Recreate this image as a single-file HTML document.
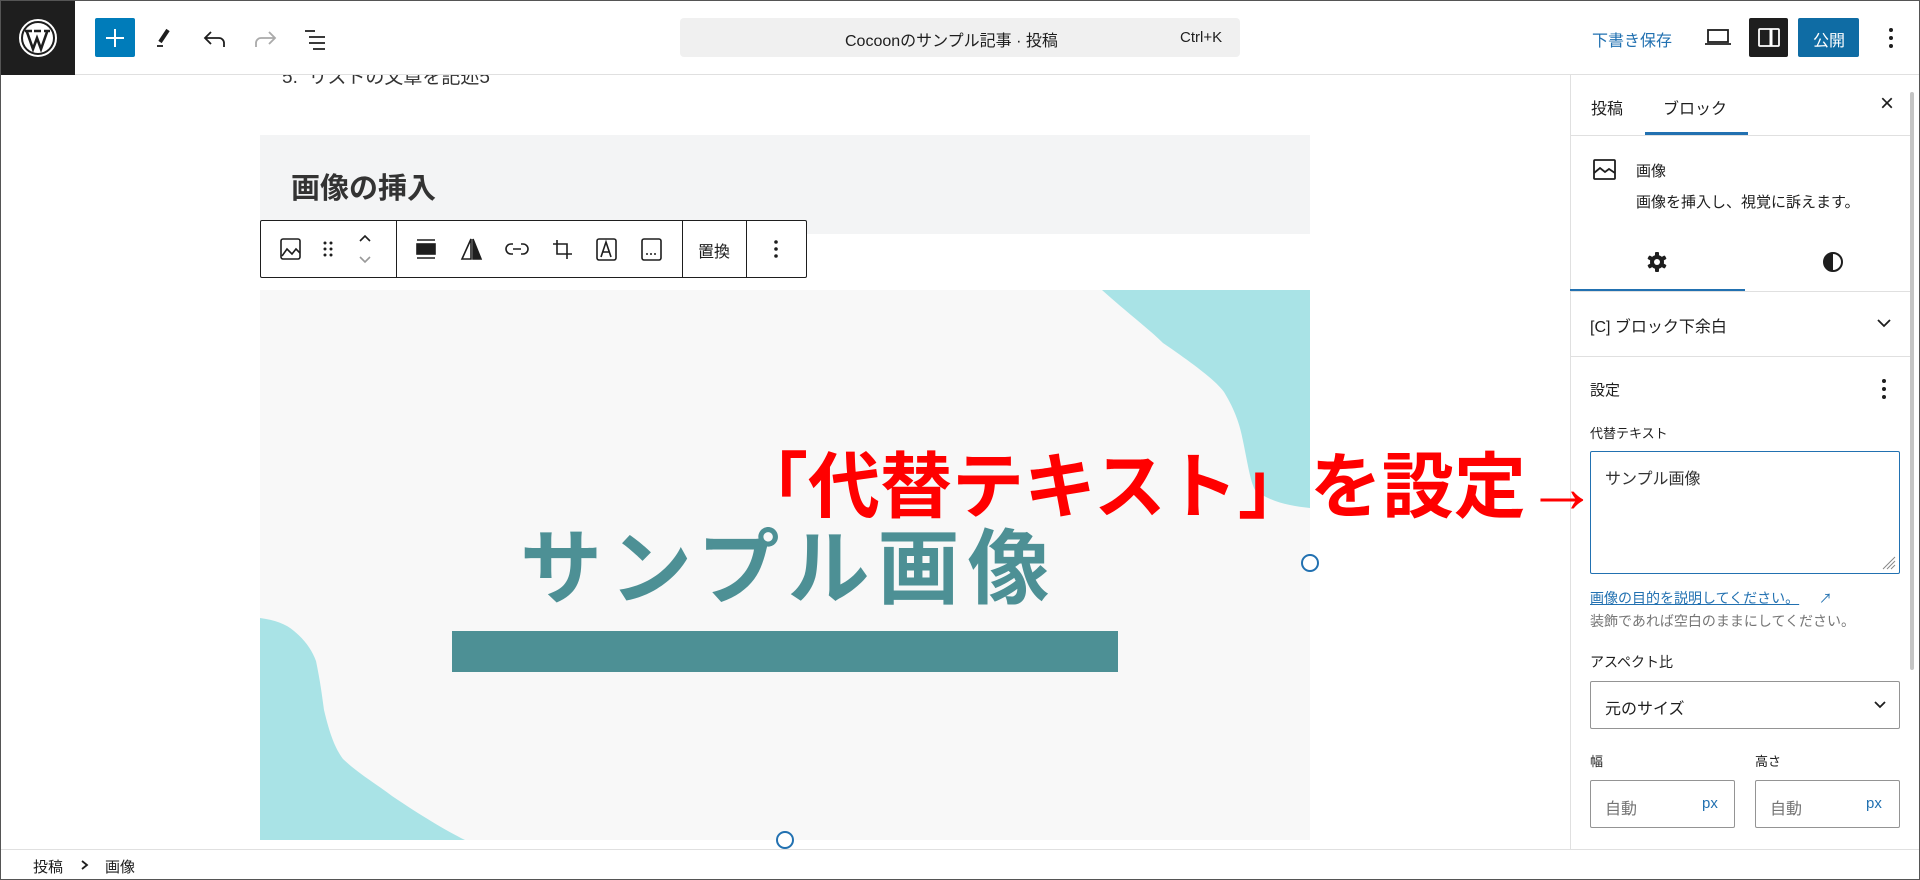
<!DOCTYPE html>
<html><head><meta charset="utf-8"><style>
*{box-sizing:border-box;margin:0;padding:0}
body{width:1920px;height:880px;overflow:hidden;background:#fff;font-family:"Liberation Sans","Noto Sans CJK JP",sans-serif;color:#1e1e1e;position:relative}
.a{position:absolute}
.frame{position:absolute;inset:0;border:1px solid #555;pointer-events:none;z-index:50}
.t{position:absolute;white-space:nowrap}
</style></head><body>
<div class="frame"></div>
<!-- content -->
<div class="t" style="left:282px;top:62px;font-size:19px;color:#333">5.&nbsp; リストの文章を記述5</div>
<div class="a" style="left:260px;top:135px;width:1050px;height:99px;background:#f3f4f5"></div>
<div class="t" style="left:291px;top:165px;font-size:29px;font-weight:bold;color:#333">画像の挿入</div>
<div class="a" style="left:260px;top:290px;width:1050px;height:550px;background:#f8f8f8;overflow:hidden">
<svg width="1050" height="550" style="position:absolute;left:0;top:0">
<path d="M842 0 C870 25 890 40 903 53 C935 75 955 90 964 102 C975 120 980 135 983 151 C988 175 990 190 995 200 C1010 212 1030 216 1050 218 L1050 0Z" fill="#a9e3e6"/>
<path d="M0 328 C15 330 26 334 34 341 C45 350 52 360 56 371 C60 390 62 405 64 420 C70 445 75 458 83 469 C100 485 118 495 132 506 C160 525 185 540 205 550 L0 550Z" fill="#a9e3e6"/>
</svg>
<div class="a" style="left:192px;top:341px;width:666px;height:41px;background:#4d9095"></div>
<div class="t" style="left:260px;top:212px;font-size:82px;font-weight:bold;color:#4d9095;letter-spacing:8px">サンプル画像</div>
</div>
<div class="a" style="left:1301px;top:554px;width:18px;height:18px;border:2px solid #2271b1;border-radius:50%;background:#fff"></div>
<div class="a" style="left:776px;top:831px;width:18px;height:18px;border:2px solid #2271b1;border-radius:50%;background:#fff"></div>
<!-- toolbar -->
<div class="a" style="left:260px;top:220px;width:547px;height:58px;border:1px solid #1e1e1e;border-radius:2px;background:#fff">
<div class="a" style="left:135px;top:0;width:1px;height:56px;background:#1e1e1e"></div>
<div class="a" style="left:421px;top:0;width:1px;height:56px;background:#1e1e1e"></div>
<div class="a" style="left:485px;top:0;width:1px;height:56px;background:#1e1e1e"></div>
</div>
<svg class="a" style="left:0;top:0" width="1000" height="300" fill="none" stroke="#1e1e1e" stroke-width="1.6">
<rect x="281" y="239" width="19" height="20" rx="2"/><path d="M282 256 L287 249 L292 254 L296 249 L300 253"/>
<g fill="#1e1e1e" stroke="none"><circle cx="325" cy="243" r="1.5"/><circle cx="331" cy="243" r="1.5"/><circle cx="325" cy="249" r="1.5"/><circle cx="331" cy="249" r="1.5"/><circle cx="325" cy="255" r="1.5"/><circle cx="331" cy="255" r="1.5"/></g>
<path d="M360 241 L365 236 L370 241"/><path d="M360 257 L365 262 L370 257" stroke="#999"/>
<path d="M417 240 H435 M417 258 H435"/><rect x="417" y="244" width="18" height="10" fill="#1e1e1e"/>
<path d="M471 239 L471 259 L462 259Z" fill="#fff"/><path d="M473 239 L481 259 L473 259Z" fill="#1e1e1e"/>
<path d="M513 244 h-2 a5 5 0 0 0 0 10 h2 M521 244 h2 a5 5 0 0 1 0 10 h-2 M513 249 h8"/>
<path d="M557 240 V254 H572 M553 244 H567 V259"/>
<rect x="597" y="239" width="19" height="21" rx="2"/><path d="M601 257 L606 242 L611 257 M603 252 H609"/>
<rect x="642" y="239" width="19" height="21" rx="2"/><g fill="#1e1e1e" stroke="none"><circle cx="647" cy="254" r="1"/><circle cx="651" cy="254" r="1"/><circle cx="655" cy="254" r="1"/></g>
<g fill="#1e1e1e" stroke="none"><circle cx="776" cy="242" r="1.8"/><circle cx="776" cy="249" r="1.8"/><circle cx="776" cy="256" r="1.8"/></g>
</svg>
<div class="t" style="left:698px;top:238px;font-size:16px">置換</div>
<!-- header -->
<div class="a" style="left:0;top:0;width:1920px;height:75px;background:#fff;border-bottom:1px solid #e0e0e0"></div>
<div class="a" style="left:0;top:0;width:75px;height:75px;background:#1e1e1e"></div>
<svg class="a" style="left:18px;top:18px" width="40" height="40" viewBox="0 0 40 40"><circle cx="20" cy="20" r="18" fill="none" stroke="#fff" stroke-width="2"/><circle cx="20" cy="20" r="15" fill="#fff"/><path d="M9 14 L15 31 L19 20 L23 31 L29 14 M7 13 H14 M16 13 H23 M26 13 H32" stroke="#1e1e1e" stroke-width="2.6" fill="none"/></svg>
<div class="a" style="left:95px;top:18px;width:40px;height:39px;background:#007cba;border-radius:2px"></div>
<svg class="a" style="left:0;top:0" width="340" height="75" fill="none" stroke="#1e1e1e" stroke-width="1.8">
<path d="M115 29 V47 M106 38 H124" stroke="#fff" stroke-width="2"/>
<path d="M168 30 L160 42" stroke-width="4"/><path d="M157 46 H163"/>
<path d="M211 32 L205 38 L211 44 M205 38 H219 a5 5 0 0 1 5 5 V47"/>
<path d="M269 32 L275 38 L269 44 M275 38 H261 a5 5 0 0 0 -5 5 V47" stroke="#aaa"/>
<path d="M305 31 H315 M309 37 H325 M309 43 H325 M313 49 H325"/>
</svg>
<div class="a" style="left:680px;top:18px;width:560px;height:39px;background:#f0f0f0;border-radius:4px"></div>
<div class="t" style="left:845px;top:27px;font-size:16px">Cocoonのサンプル記事 · 投稿</div>
<div class="t" style="left:1180px;top:29px;font-size:15px">Ctrl+K</div>
<div class="t" style="left:1592px;top:27px;font-size:16px;color:#2271b1">下書き保存</div>
<svg class="a" style="left:1704px;top:26px" width="28" height="22" fill="none" stroke="#1e1e1e" stroke-width="1.8"><rect x="4" y="4" width="20" height="12"/><path d="M1 18 H27"/></svg>
<div class="a" style="left:1749px;top:18px;width:39px;height:39px;background:#1e1e1e;border-radius:2px"></div>
<svg class="a" style="left:1757px;top:27px" width="24" height="22" fill="none" stroke="#fff" stroke-width="1.8"><rect x="2" y="2" width="20" height="17" rx="1"/><path d="M14 2 V19" stroke-width="3"/></svg>
<div class="a" style="left:1798px;top:18px;width:61px;height:39px;background:#0f6ca4;border-radius:2px"></div>
<div class="t" style="left:1813px;top:27px;font-size:16px;color:#fff">公開</div>
<svg class="a" style="left:1885px;top:25px" width="12" height="26" fill="#1e1e1e"><circle cx="6" cy="5" r="2"/><circle cx="6" cy="13" r="2"/><circle cx="6" cy="21" r="2"/></svg>
<!-- sidebar -->
<div class="a" style="left:1570px;top:75px;width:350px;height:774px;background:#fff;border-left:1px solid #e0e0e0"></div>
<div class="a" style="left:1910px;top:92px;width:4px;height:578px;background:#c4c4c4;border-radius:2px"></div>
<div class="t" style="left:1591px;top:95px;font-size:16px">投稿</div>
<div class="t" style="left:1663px;top:95px;font-size:16px">ブロック</div>
<div class="a" style="left:1645px;top:132px;width:103px;height:3px;background:#2271b1"></div>
<div class="t" style="left:1880px;top:90px;font-size:24px">×</div>
<div class="a" style="left:1570px;top:135px;width:340px;height:1px;background:#e0e0e0"></div>
<svg class="a" style="left:1592px;top:158px" width="26" height="24" fill="none" stroke="#1e1e1e" stroke-width="1.8"><rect x="2" y="2" width="21" height="19" rx="1"/><path d="M2 15 L8 10 L13 14 L17 11 L23 15"/></svg>
<div class="t" style="left:1636px;top:160px;font-size:15px">画像</div>
<div class="t" style="left:1636px;top:191px;font-size:15px">画像を挿入し、視覚に訴えます。</div>
<svg class="a" style="left:1646px;top:251px" width="22" height="22" viewBox="0 0 22 22"><g fill="#1e1e1e"><circle cx="11" cy="11" r="7"/><rect x="9" y="1" width="4" height="20" rx="1"/><rect x="9" y="1" width="4" height="20" rx="1" transform="rotate(60 11 11)"/><rect x="9" y="1" width="4" height="20" rx="1" transform="rotate(120 11 11)"/></g><circle cx="11" cy="11" r="3" fill="#fff"/></svg>
<svg class="a" style="left:1822px;top:251px" width="22" height="22"><circle cx="11" cy="11" r="9" fill="none" stroke="#1e1e1e" stroke-width="2"/><path d="M11 2 A9 9 0 0 0 11 20Z" fill="#1e1e1e"/></svg>
<div class="a" style="left:1570px;top:289px;width:175px;height:2px;background:#2271b1"></div>
<div class="a" style="left:1570px;top:291px;width:340px;height:1px;background:#e0e0e0"></div>
<div class="t" style="left:1590px;top:313px;font-size:16px">[C] ブロック下余白</div>
<svg class="a" style="left:1876px;top:318px" width="16" height="10" fill="none" stroke="#1e1e1e" stroke-width="1.8"><path d="M2 2 L8 8 L14 2"/></svg>
<div class="a" style="left:1570px;top:356px;width:340px;height:1px;background:#e0e0e0"></div>
<div class="t" style="left:1590px;top:379px;font-size:15px">設定</div>
<svg class="a" style="left:1878px;top:376px" width="12" height="26" fill="#1e1e1e"><circle cx="6" cy="5" r="2"/><circle cx="6" cy="13" r="2"/><circle cx="6" cy="21" r="2"/></svg>
<div class="t" style="left:1590px;top:423px;font-size:13px">代替テキスト</div>
<div class="a" style="left:1590px;top:451px;width:310px;height:123px;border:1px solid #2271b1;border-radius:2px"></div>
<div class="t" style="left:1605px;top:465px;font-size:16px;color:#333">サンプル画像</div>
<svg class="a" style="left:1880px;top:554px" width="16" height="16" stroke="#888" stroke-width="1"><path d="M15 3 L3 15 M15 7 L7 15 M15 11 L11 15"/></svg>
<div class="t" style="left:1590px;top:588px;font-size:14px;color:#2271b1;text-decoration:underline">画像の目的を説明してください。</div>
<div class="t" style="left:1819px;top:588px;font-size:13px;color:#2271b1">↗</div>
<div class="t" style="left:1590px;top:611px;font-size:14px;color:#757575">装飾であれば空白のままにしてください。</div>
<div class="t" style="left:1590px;top:652px;font-size:14px">アスペクト比</div>
<div class="a" style="left:1590px;top:681px;width:310px;height:48px;border:1px solid #949494;border-radius:2px"></div>
<div class="t" style="left:1605px;top:695px;font-size:16px">元のサイズ</div>
<svg class="a" style="left:1873px;top:700px" width="14" height="9" fill="none" stroke="#1e1e1e" stroke-width="1.8"><path d="M2 2 L7 7 L12 2"/></svg>
<div class="t" style="left:1590px;top:751px;font-size:13px">幅</div>
<div class="t" style="left:1755px;top:751px;font-size:13px">高さ</div>
<div class="a" style="left:1590px;top:780px;width:145px;height:48px;border:1px solid #949494;border-radius:2px"></div>
<div class="a" style="left:1755px;top:780px;width:145px;height:48px;border:1px solid #949494;border-radius:2px"></div>
<div class="t" style="left:1605px;top:795px;font-size:16px;color:#757575">自動</div>
<div class="t" style="left:1770px;top:795px;font-size:16px;color:#757575">自動</div>
<div class="t" style="left:1702px;top:795px;font-size:15px;color:#2271b1">px</div>
<div class="t" style="left:1866px;top:795px;font-size:15px;color:#2271b1">px</div>
<!-- red annotation (on top) -->
<div class="t" style="left:736px;top:446px;font-size:72px;font-weight:bold;color:#ff0000;line-height:84px;z-index:40">「代替テキスト」を設定→</div>
<!-- footer -->
<div class="a" style="left:0;top:849px;width:1920px;height:31px;background:#fff;border-top:1px solid #e0e0e0"></div>
<div class="t" style="left:33px;top:856px;font-size:15px">投稿</div>
<svg class="a" style="left:80px;top:859px" width="10" height="12" fill="none" stroke="#1e1e1e" stroke-width="1.8"><path d="M2 2 L7 6 L2 10"/></svg>
<div class="t" style="left:105px;top:856px;font-size:15px">画像</div>
</body></html>
